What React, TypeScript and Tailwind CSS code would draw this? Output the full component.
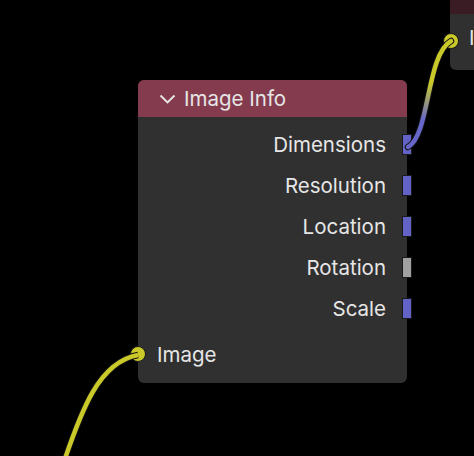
import React from "react";

const outputs = [
  { name: "Dimensions", color: "bg-[#6363c7]" },
  { name: "Resolution", color: "bg-[#6363c7]" },
  { name: "Location", color: "bg-[#6363c7]" },
  { name: "Rotation", color: "bg-[#a1a1a1]" },
  { name: "Scale", color: "bg-[#6363c7]" },
];

function Links() {
  return (
    <svg className="absolute inset-0 pointer-events-none" width={474} height={456}>
      <defs>
        <linearGradient id="lnk" x1="0" y1="41" x2="0" y2="146" gradientUnits="userSpaceOnUse">
          <stop offset="0.4" stopColor="#c9c92a" />
          <stop offset="0.75" stopColor="#6666c8" />
        </linearGradient>
      </defs>
      <path d="M408,147 C430,135 426,55 451,41" fill="none" stroke="#111" strokeWidth={6.5} strokeLinecap="round" />
      <path d="M408,147 C430,135 426,55 451,41" fill="none" stroke="url(#lnk)" strokeWidth={4.5} strokeLinecap="round" />
      <path d="M58,480 C82,405 100,362 138,355" fill="none" stroke="#111" strokeWidth={6.5} />
      <path d="M58,480 C82,405 100,362 138,355" fill="none" stroke="#c9c92a" strokeWidth={4.5} />
    </svg>
  );
}

export default function App() {
  return (
    <div
      className="relative w-[474px] h-[456px] bg-black overflow-hidden text-[#e6e6e6]"
      style={{ fontFamily: "Inter, 'DejaVu Sans', sans-serif" }}
    >
      {/* node on the right, cut off by the view */}
      <div className="absolute left-[450px] top-[-30px] w-[120px] h-[100px] rounded-b-md overflow-hidden bg-[#303030]">
        <div className="h-[44px] bg-[#3a1c25]" />
        <div className="pl-[19px] pt-[14px] text-[20.5px] leading-none">Image</div>
      </div>

      {/* Image Info node */}
      <div className="absolute left-[138px] top-[80px] w-[269px] h-[303px] rounded-md bg-[#303030]">
        <div className="h-[37px] rounded-t-md bg-[#843b4e] flex items-center pl-[21px] pt-[1px] gap-[8px]">
          <svg width="17" height="11" viewBox="0 0 17 11">
            <path d="M1.5 1.5 L8.5 8.5 L15.5 1.5" fill="none" stroke="#e6e6e6" strokeWidth={1.9} />
          </svg>
          <span className="text-[20.5px] leading-none">Image Info</span>
        </div>
        <div className="pt-[7px] pb-[8px]">
          {outputs.map((o) => (
            <div key={o.name} className="relative h-[41px] flex items-center justify-end pr-[21px] pt-[2px] text-[20.5px]">
              {o.name}
              <div className={`absolute right-[-5px] top-[10px] w-[10px] h-[21px] border border-[#1a1a1a] ${o.color}`} />
            </div>
          ))}
          <div className="relative mt-[5px] h-[41px] flex items-center pl-[19px] pt-[2px] text-[20.5px]">
            Image
            <div className="absolute left-[-8px] top-[12px] w-[16px] h-[16px] rounded-full bg-[#c9c92a] border border-[#1a1a1a]" />
          </div>
        </div>
      </div>

      <div className="absolute left-[443px] top-[33px] w-[16px] h-[16px] rounded-full bg-[#c9c92a] border border-[#1a1a1a]" />
      <Links />
    </div>
  );
}
